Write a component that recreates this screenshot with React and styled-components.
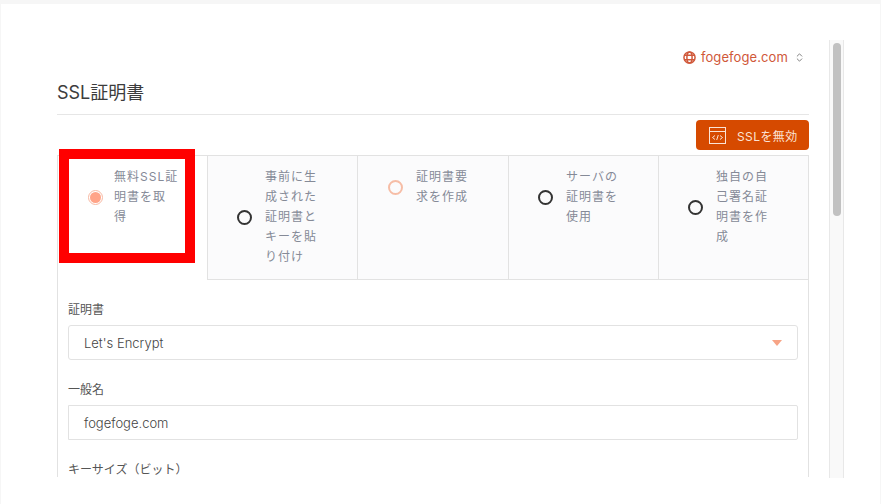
import React from 'react';
import styled, { createGlobalStyle } from 'styled-components';
import { ChevronsUpDown } from 'lucide-react';

const GlobalStyle = createGlobalStyle`
  html, body {
    margin: 0;
    padding: 0;
    background: #f6f6f6;
  }
  * {
    box-sizing: border-box;
  }
  body {
    font-family: Inter, "Noto Sans CJK JP", sans-serif;
    color: #444;
  }
`;

const Card = styled.div`
  position: relative;
  margin: 4px 1px 0 1px;
  height: 500px;
  padding: 36px 0 0 56px;
  background: #fff;
`;

const Frame = styled.div`
  display: flex;
  width: 787px;
  height: 438px;
`;

const Scroller = styled.div`
  width: 772px;
  padding-right: 20px;
  overflow: hidden;
`;

const Track = styled.div`
  width: 15px;
  background: #f9f9f9;
  border-left: 1px solid #e8e8e8;
  border-right: 1px solid #e8e8e8;
  padding: 3px 2px 0 3px;
`;

const Thumb = styled.div`
  height: 173px;
  border-radius: 4px;
  background: #c1c1c1;
`;

const DomainRow = styled.div`
  display: flex;
  justify-content: flex-end;
  align-items: center;
  height: 34px;
  padding-right: 4px;
  color: #d0583a;
  font-size: 13px;
`;

const DomainName = styled.span`
  margin: 0 6px 0 5px;
  letter-spacing: 0.1px;
`;

const Title = styled.h2`
  margin: 0;
  height: 41px;
  padding-top: 6px;
  border-bottom: 1px solid #e6e6e6;
  font-size: 18px;
  font-weight: 400;
  line-height: 26px;
  color: #3c3c3c;
`;

const ActionRow = styled.div`
  display: flex;
  justify-content: flex-end;
  padding-top: 5px;
`;

const DisableButton = styled.button`
  display: flex;
  align-items: center;
  gap: 11px;
  width: 113px;
  height: 30px;
  padding: 0 0 0 13px;
  border: none;
  border-radius: 4px;
  background: #d64a00;
  color: #fbe3d6;
  font-family: inherit;
  font-size: 12px;
  letter-spacing: 0.4px;
`;

const Tabs = styled.div`
  display: grid;
  grid-template-columns: 151px 150px 151px 150px 150px;
  margin-top: 5px;
`;

const Tab = styled.div`
  height: 125px;
  padding: 11px 0 0 ${p => p.$inset}px;
  background: ${p => (p.$active ? '#fff' : '#fbfbfc')};
  border-top: 1px solid #e2e2e2;
  border-right: 1px solid #e2e2e2;
  border-bottom: ${p => (p.$active ? 'none' : '1px solid #e2e2e2')};
  border-left: ${p => (p.$active ? '1px solid #e2e2e2' : 'none')};
`;

const TabInner = styled.div`
  display: flex;
  align-items: center;
  gap: ${p => (p.$active ? 11 : 13)}px;
`;

const radioBorders = {
  dark: '2px solid #333',
  light: '2px solid #f6bda6',
  checked: '1px solid #f7b9a3',
};

const Radio = styled.span`
  flex: none;
  position: relative;
  width: 15px;
  height: 15px;
  border-radius: 50%;
  border: ${p => radioBorders[p.$tone]};

  ${p =>
    p.$tone === 'checked' &&
    `&::after {
      content: '';
      position: absolute;
      inset: 1px;
      border-radius: 50%;
      background: #ffa488;
    }`}
`;

const TabLabel = styled.div`
  width: 64.5px;
  font-size: 12px;
  line-height: 20px;
  letter-spacing: 1px;
  color: #858a97;
`;

const Panel = styled.div`
  padding: 21px 10px 0 10px;
  border-left: 1px solid #e2e2e2;
  border-right: 1px solid #e2e2e2;
`;

const Field = styled.div`
  margin-bottom: 21px;
`;

const FieldLabel = styled.label`
  display: block;
  height: 16px;
  margin-bottom: 8px;
  font-size: 12px;
  line-height: 17px;
  color: #555;
`;

const Control = styled.div`
  display: flex;
  align-items: center;
  justify-content: space-between;
  height: 35px;
  padding: 0 15px;
  border: 1px solid #e2e2e2;
  border-radius: ${p => (p.$square ? '0 2px 2px 0' : '3px')};
  font-size: 13px;
  font-weight: 300;
  color: #444;
`;

const Caret = styled.span`
  width: 0;
  height: 0;
  border-left: 5px solid transparent;
  border-right: 5px solid transparent;
  border-top: 6px solid #f7a486;
`;

const Highlight = styled.div`
  position: absolute;
  left: 58px;
  top: 145px;
  width: 136px;
  height: 114px;
  border: 10px solid #ff0000;
`;

const GlobeIcon = () => (
  <svg width="13" height="13" viewBox="0 0 14 14" fill="none" stroke="currentColor" strokeWidth="1.6">
    <circle cx="7" cy="7" r="6" />
    <ellipse cx="7" cy="7" rx="2.8" ry="6" />
    <path d="M1.6 4.6h10.8M1.6 9.4h10.8" />
  </svg>
);

const CodeWindowIcon = () => (
  <svg width="17" height="17" viewBox="0 0 17 17" fill="none" stroke="#fbe3d6" strokeWidth="1">
    <rect x="0.5" y="0.5" width="16" height="16" />
    <path d="M0.5 4.5h16" />
    <path d="M6 8.5l-2.5 2 2.5 2M11 8.5l2.5 2-2.5 2M9.3 8l-1.6 5" />
  </svg>
);

const tabs = [
  { label: '無料SSL証明書を取得', active: true, tone: 'checked', inset: 30 },
  { label: '事前に生成された証明書とキーを貼り付け', tone: 'dark', inset: 29 },
  { label: '証明書要求を作成', tone: 'light', inset: 30 },
  { label: 'サーバの証明書を使用', tone: 'dark', inset: 29 },
  { label: '独自の自己署名証明書を作成', tone: 'dark', inset: 29 },
];

function App() {
  return (
    <>
      <GlobalStyle />
      <Card>
        <Frame>
          <Scroller>
            <DomainRow>
              <GlobeIcon />
              <DomainName>fogefoge.com</DomainName>
              <ChevronsUpDown size={11} strokeWidth={1.6} color="#555" />
            </DomainRow>
            <Title>SSL証明書</Title>
            <ActionRow>
              <DisableButton>
                <CodeWindowIcon />
                SSLを無効
              </DisableButton>
            </ActionRow>
            <Tabs>
              {tabs.map(tab => (
                <Tab key={tab.label} $active={tab.active} $inset={tab.inset}>
                  <TabInner $active={tab.active}>
                    <Radio $tone={tab.tone} />
                    <TabLabel>{tab.label}</TabLabel>
                  </TabInner>
                </Tab>
              ))}
            </Tabs>
            <Panel>
              <Field>
                <FieldLabel>証明書</FieldLabel>
                <Control>
                  Let's Encrypt
                  <Caret />
                </Control>
              </Field>
              <Field>
                <FieldLabel>一般名</FieldLabel>
                <Control $square>fogefoge.com</Control>
              </Field>
              <Field>
                <FieldLabel>キーサイズ（ビット）</FieldLabel>
              </Field>
            </Panel>
          </Scroller>
          <Track>
            <Thumb />
          </Track>
        </Frame>
        <Highlight />
      </Card>
    </>
  );
}

export default App;
